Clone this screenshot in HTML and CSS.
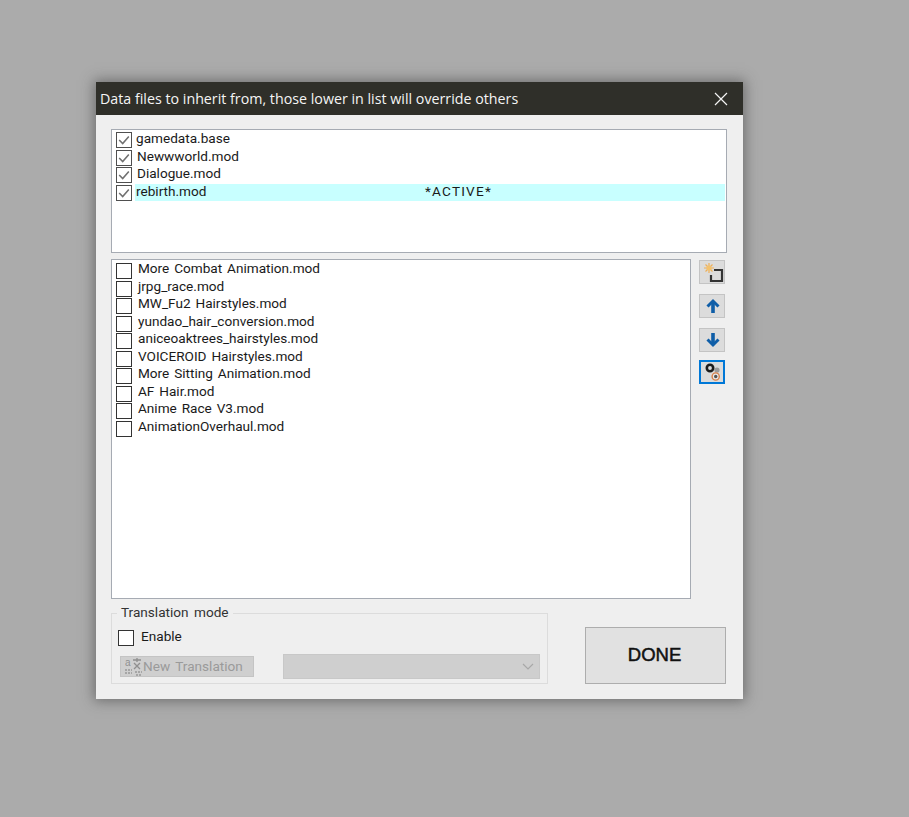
FILE: index.html
```html
<!DOCTYPE html>
<html lang="en">
<head>
<meta charset="utf-8">
<title>Inherit</title>
<link rel="stylesheet" href="styles.css">
</head>
<body>
<div class="dialog">
  <div class="titlebar">
    <span class="title">Data files to inherit from, those lower in list will override others</span>
    <svg class="close" width="14" height="14" viewBox="0 0 14 14"><path d="M1 1L13 13M13 1L1 13" stroke="#f4f4f4" stroke-width="1.2" fill="none"/></svg>
  </div>
  <div class="content">
    <div class="list top-list">
      <div class="row"><span class="check on"><svg viewBox="0 0 16 16"><path d="M2.5 8L6.5 12L13.5 4" stroke="#707070" stroke-width="1.8" fill="none"/></svg></span><span class="label tight">gamedata.base</span></div>
      <div class="row"><span class="check on"><svg viewBox="0 0 16 16"><path d="M2.5 8L6.5 12L13.5 4" stroke="#707070" stroke-width="1.8" fill="none"/></svg></span><span class="label">Newwworld.mod</span></div>
      <div class="row"><span class="check on"><svg viewBox="0 0 16 16"><path d="M2.5 8L6.5 12L13.5 4" stroke="#707070" stroke-width="1.8" fill="none"/></svg></span><span class="label">Dialogue.mod</span></div>
      <div class="row"><span class="check on"><svg viewBox="0 0 16 16"><path d="M2.5 8L6.5 12L13.5 4" stroke="#707070" stroke-width="1.8" fill="none"/></svg></span><span class="label active tight"><span class="name">rebirth.mod</span><span class="flag">*ACTIVE*</span></span></div>
    </div>
    <div class="middle">
      <div class="list bottom-list">
        <div class="row"><span class="check"></span><span class="label">More Combat Animation.mod</span></div>
        <div class="row"><span class="check"></span><span class="label">jrpg_race.mod</span></div>
        <div class="row"><span class="check"></span><span class="label">MW_Fu2 Hairstyles.mod</span></div>
        <div class="row"><span class="check"></span><span class="label">yundao_hair_conversion.mod</span></div>
        <div class="row"><span class="check"></span><span class="label">aniceoaktrees_hairstyles.mod</span></div>
        <div class="row"><span class="check"></span><span class="label">VOICEROID Hairstyles.mod</span></div>
        <div class="row"><span class="check"></span><span class="label">More Sitting Animation.mod</span></div>
        <div class="row"><span class="check"></span><span class="label">AF Hair.mod</span></div>
        <div class="row"><span class="check"></span><span class="label">Anime Race V3.mod</span></div>
        <div class="row"><span class="check"></span><span class="label">AnimationOverhaul.mod</span></div>
      </div>
      <div class="tools">
        <div class="tool"><svg width="24" height="22" viewBox="0 0 24 22">
          <path d="M9 2V12M4 7H14M5.5 3.5L12.5 10.5M12.5 3.5L5.5 10.5" stroke="#eeb05a" stroke-width="1.2"/>
          <circle cx="9" cy="7" r="2.6" fill="#f3c26e"/>
          <path d="M14 9H22V20H11V14" stroke="#333" stroke-width="2.2" fill="none"/>
        </svg></div>
        <div class="tool"><svg width="24" height="22" viewBox="0 0 24 22"><path d="M13 6V18" stroke="#0f5ea8" stroke-width="3.6"/><path d="M7.5 11.5L13 6L18.5 11.5" stroke="#0f5ea8" stroke-width="3" fill="none"/></svg></div>
        <div class="tool"><svg width="24" height="22" viewBox="0 0 24 22"><path d="M13 4V16" stroke="#0f5ea8" stroke-width="3.6"/><path d="M7.5 10.5L13 16L18.5 10.5" stroke="#0f5ea8" stroke-width="3" fill="none"/></svg></div>
        <div class="tool selected"><svg width="22" height="20" viewBox="0 0 22 20">
          <circle cx="16" cy="8" r="2.6" fill="#9a9a9a"/>
          <circle cx="9" cy="6" r="3.2" fill="#ddd" stroke="#1c1c1c" stroke-width="2.6"/>
          <circle cx="14.7" cy="14.5" r="3.6" fill="#e8e8e8" stroke="#d9804a" stroke-width="1.4"/>
          <circle cx="14.7" cy="14.5" r="1.7" fill="#555"/>
        </svg></div>
      </div>
    </div>
    <div class="bottom">
      <div class="group">
        <div class="legend">Translation mode</div>
        <div class="enable"><span class="check"></span><span class="enable-text">Enable</span></div>
        <div class="controls">
          <div class="new-btn"><svg width="18" height="19" viewBox="0 0 18 19">
            <text x="0" y="9" class="glyph">a</text>
            <path d="M8 3H16M12 1V5M9 6L15 12M15 6L9 12" stroke="#8f8f8f" stroke-width="1.3" fill="none"/>
            <path d="M0 13H7M0 16H7M10 15H17M11 18H17" stroke="#999" stroke-width="1.4" stroke-dasharray="2 1"/>
          </svg><span>New Translation</span></div>
          <div class="combo"><svg width="12" height="7" viewBox="0 0 12 7"><path d="M1 1L6 6L11 1" stroke="#a8a8a8" stroke-width="1.2" fill="none"/></svg></div>
        </div>
      </div>
      <div class="done">DONE</div>
    </div>
  </div>
</div>
</body>
</html>
```
FILE: styles.css
```css
* { box-sizing: border-box; }
html, body { margin: 0; height: 100%; }
body {
  background: #ababab;
  padding: 82px 0 0 96px;
  font-family: Roboto, "Noto Sans", sans-serif;
  overflow: hidden;
}
.dialog {
  width: 647px;
  height: 617px;
  background: #efefef;
  box-shadow: 0 0 12px 2px rgba(60, 60, 60, 0.55);
}
.titlebar {
  height: 33px;
  background: #2f2f29;
  color: #f5f5f5;
  display: flex;
  align-items: center;
  justify-content: space-between;
  padding: 0 15px 0 4px;
}
.title { font-family: "Open Sans", sans-serif; font-size: 14.25px; white-space: nowrap; }
.close { margin-top: 1px; }
.content { padding: 14px 16px 0 15px; }
.list {
  background: #fff;
  border: 1px solid #a6abb3;
  padding: 1px 1px 0 3px;
}
.top-list { height: 124px; width: 616px; }
.middle { display: flex; margin-top: 6px; }
.bottom-list { height: 340px; width: 580px; padding-top: 0; }
.row { height: 17.5px; display: flex; align-items: center; }
.check {
  width: 16px;
  height: 16px;
  flex: none;
  border: 1px solid #333;
  background: #fff;
  display: block;
  margin: 1px 3px 0 1px;
}
.bottom-list .check { margin-top: 4.5px; }
.check.on { border-color: #4f4f4f; }
.check svg { display: block; width: 14px; height: 14px; }
.label {
  flex: 1;
  height: 17.5px;
  line-height: 15px;
  font-size: 13.6px;
  word-spacing: 1.5px;
  color: #1a1a1a;
  padding-left: 2px;
  white-space: nowrap;
}
.bottom-list .label { line-height: 17px; padding-left: 3px; }
.tight { padding-left: 1px; }
.active { background: #c8ffff; display: flex; }
.name { width: 289px; }
.flag { letter-spacing: 1.2px; }
.tools {
  display: flex;
  flex-direction: column;
  gap: 10px;
  margin: 1px 0 0 8px;
}
.tool {
  width: 26px;
  height: 24px;
  background: #dcdcdc;
  border: 1px solid #c4c4c4;
  display: flex;
  align-items: center;
  justify-content: center;
}
.tool.selected { border: 2px solid #0078d7; margin-top: -2px; }
.bottom { display: flex; align-items: flex-end; margin-top: 14px; }
.group {
  position: relative;
  width: 437px;
  height: 71px;
  border: 1px solid #dcdcdc;
  padding: 15px 7px 0 6px;
}
.legend {
  position: absolute;
  top: -10px;
  left: 5px;
  background: #efefef;
  padding: 0 4px;
  font-size: 13.6px;
  word-spacing: 2px;
  line-height: 17px;
  color: #333;
}
.enable { display: flex; align-items: center; height: 17px; }
.enable .check { margin: 0; }
.enable-text { font-size: 13.6px; color: #1a1a1a; margin-left: 7px; line-height: 13px; padding-bottom: 2px; }
.controls { display: flex; justify-content: space-between; margin-top: 8px; padding-left: 2px; }
.new-btn {
  width: 134px;
  height: 21px;
  background: #cfcfcf;
  border: 1px solid #c4c4c4;
  color: #9a9a9a;
  font-size: 13.6px;
  word-spacing: 2px;
  line-height: 19px;
  display: flex;
  align-items: center;
  white-space: nowrap;
  overflow: hidden;
  margin-top: 2px;
}
.new-btn svg { flex: none; margin-left: 4px; }
.glyph { font-size: 10px; fill: #8f8f8f; font-family: "Liberation Sans", sans-serif; }
.combo {
  width: 257px;
  height: 25px;
  background: #cfcfcf;
  border: 1px solid #c8c8c8;
  display: flex;
  align-items: center;
  justify-content: flex-end;
  padding-right: 5px;
}
.done {
  width: 141px;
  height: 57px;
  margin-left: 37px;
  background: #e1e1e1;
  border: 1px solid #adadad;
  display: flex;
  align-items: center;
  justify-content: center;
  padding: 0 2px 1px 0;
  font-family: "Liberation Sans", sans-serif;
  font-size: 18.5px;
  -webkit-text-stroke: 0.5px #111;
  color: #111;
}
```
